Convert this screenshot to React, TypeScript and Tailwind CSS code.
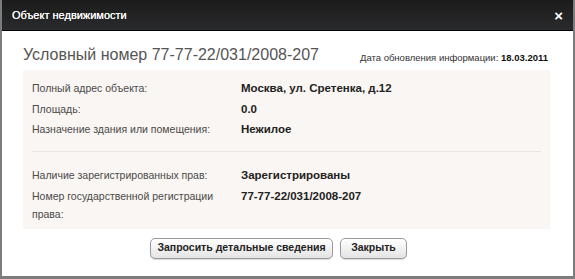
import React from "react";

const rows1 = [
  ["Полный адрес объекта:", "Москва, ул. Сретенка, д.12"],
  ["Площадь:", "0.0"],
  ["Назначение здания или помещения:", "Нежилое"],
];
const rows2 = [
  ["Наличие зарегистрированных прав:", "Зарегистрированы"],
  ["Номер государственной регистрации права:", "77-77-22/031/2008-207"],
];

function Row({ label, value }: { label: string; value: string }) {
  return (
    <div className="flex items-start leading-[18px]">
      <div className="w-[209px] shrink-0">
        <div className="w-[196px] text-[10.5px] text-[#4a4a4a]">{label}</div>
      </div>
      <div className="font-bold text-[11.5px] text-[#222] whitespace-nowrap">{value}</div>
    </div>
  );
}

export default function App() {
  return (
    <div
      className="w-[575px] h-[279px] bg-white flex flex-col border-x-[2px] border-b-[3px] border-[#7d7d7d] overflow-hidden"
      style={{ fontFamily: '"Liberation Sans", Arial, sans-serif' }}
    >
      <div className="h-[31px] shrink-0 -mx-[2px] bg-gradient-to-b from-[#1b1b1b] to-[#2a2b2d] flex items-center justify-between pl-[12px] pr-[12px] border-b border-[#000]">
        <span className="text-white text-[11px] [text-shadow:0_0_0.6px_#fff]">Объект недвижимости</span>
        <span className="text-white font-bold text-[15px] leading-none">×</span>
      </div>
      <div className="flex-1 flex flex-col px-[21px]">
        <div className="flex items-end justify-between pt-[13px] pb-[4px] w-[527px]">
          <span className="text-[16px] leading-[22px] text-[#555] whitespace-nowrap">
            Условный номер 77-77-22/031/2008-207
          </span>
          <span className="text-[9.5px] leading-[12px] text-[#333] whitespace-nowrap mb-[2px] mr-[2px]">
            Дата обновления информации: <b className="text-[#111] text-[9.5px]">18.03.2011</b>
          </span>
        </div>
        <div className="bg-[#faf6f3] w-[527px] pl-[9px] pt-[9px] pb-[6px] flex flex-col">
          <div className="flex flex-col gap-[2.5px]">
            {rows1.map(([l, v]) => (
              <Row key={l} label={l} value={v} />
            ))}
          </div>
          <div className="h-px bg-[#eee5de] mr-[9px] mt-[13px] mb-[14px]" />
          <div className="flex flex-col gap-[2.5px]">
            {rows2.map(([l, v]) => (
              <Row key={l} label={l} value={v} />
            ))}
          </div>
        </div>
        <div className="flex justify-center gap-[7px] mt-[9px] mr-[18px]">
          <button className="w-[183px] h-[21px] px-0 whitespace-nowrap rounded-[5px] border border-[#9a9a9a] bg-gradient-to-b from-[#ffffff] to-[#e4e4e4] text-[10.5px] font-bold text-[#222] shadow-[0_1px_1px_rgba(0,0,0,0.15)]">
            Запросить детальные сведения
          </button>
          <button className="w-[67px] h-[21px] px-0 whitespace-nowrap rounded-[5px] border border-[#9a9a9a] bg-gradient-to-b from-[#ffffff] to-[#e4e4e4] text-[10.5px] font-bold text-[#222] shadow-[0_1px_1px_rgba(0,0,0,0.15)]">
            Закрыть
          </button>
        </div>
      </div>
    </div>
  );
}
